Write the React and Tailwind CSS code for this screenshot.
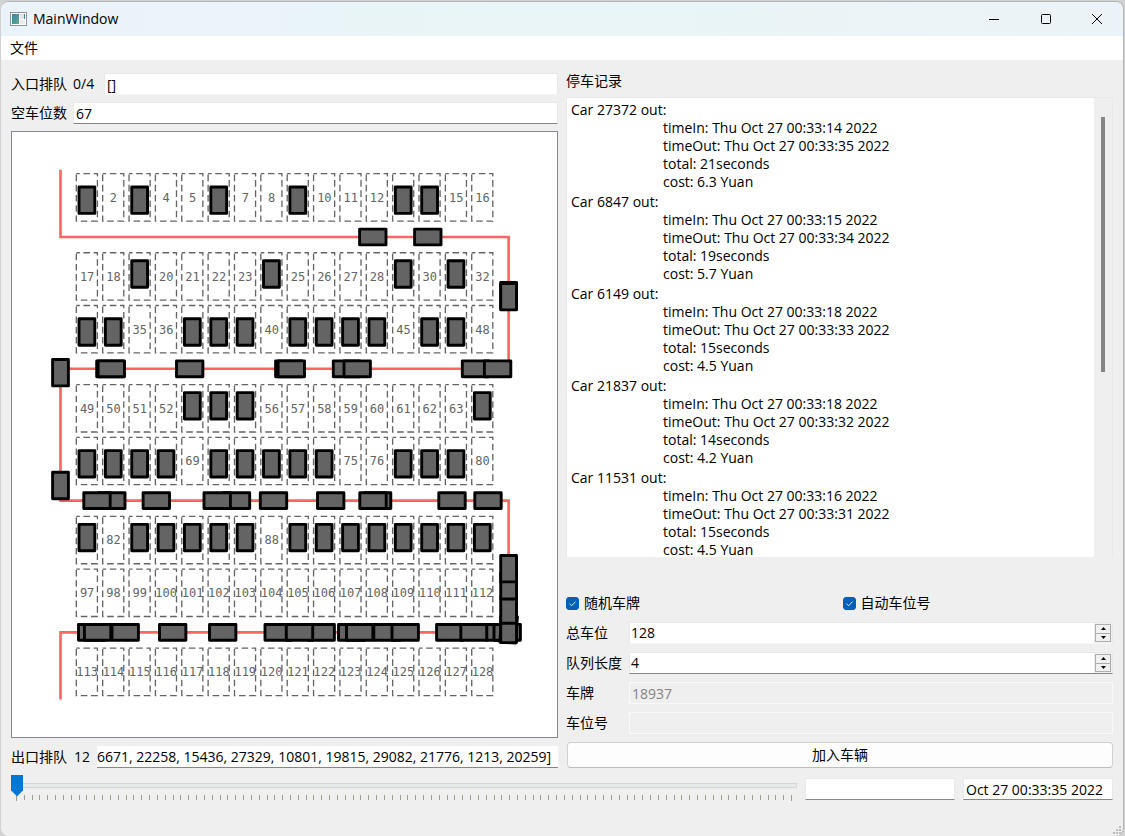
import React from "react";

const U = 26.36;
const X0 = 60.5;
const Y0 = 237;
const ROW_TOPS = [0, 3, 5, 8, 10, 13, 15, 18].map((n) => 173.7 + n * U);
const OCCUPIED = new Set([
  1, 3, 6, 9, 13, 14, 19, 24, 29, 31, 33, 34, 37, 38, 39, 41, 42, 43, 44, 46, 47,
  53, 54, 55, 64, 65, 66, 67, 68, 70, 71, 72, 73, 74, 77, 78, 79,
  81, 83, 84, 85, 86, 87, 89, 90, 91, 92, 93, 94, 95, 96,
]);

// Cars on each road, drawn in order: [x, y, heading in degrees]
const LANES = [Y0, Y0 + 5 * U, Y0 + 10 * U, Y0 + 15 * U];
const RIGHT = X0 + 17 * U;
const CARS = [
  ...[372.8, 427.8].map((x) => [x, LANES[0], 0]),
  [RIGHT, 295.6, 90],
  [RIGHT, 296.7, 90],
  ...[109.9, 111.3, 189.7, 288.8, 291.3, 346.5, 357.2, 475.5, 497.6].map((x) => [x, LANES[1], 0]),
  [X0, 372.7, 90],
  [X0, 485.5, 90],
  ...[488, 452, 377.6, 373, 330.7, 273.5, 236.5, 217.2, 156.3, 111.8, 97].map((x) => [x, LANES[2], 0]),
  ...[91.7, 125.2, 97.6, 172.7, 222.7, 278.2, 321.2, 299.5, 351.7, 387, 359.7, 405.2, 449.8, 474, 500, 507.2].map((x) => [x, LANES[3], 0]),
  [RIGHT, 629.4, 94],
  [RIGHT, 629.4, 90],
  [RIGHT, 610, 90],
  [RIGHT, 585.8, 90],
  [RIGHT, 568.7, 90],
];

function Car({ x, y, angle }) {
  return (
    <rect
      x={-13.2}
      y={-7.9}
      width={26.4}
      height={15.8}
      fill="#646464"
      stroke="#000"
      strokeWidth={2.9}
      strokeLinejoin="round"
      transform={`translate(${x} ${y}) rotate(${angle})`}
    />
  );
}

function ParkingMap() {
  const spots = Array.from({ length: 128 }, (_, i) => {
    const row = Math.floor(i / 16);
    return { n: i + 1, x: X0 + (0.6 + (i % 16)) * U, y: ROW_TOPS[row], row };
  });
  return (
    <svg viewBox="12 132 545 605" className="block w-full h-auto" role="img" aria-label="停车场">
      <path
        d={`M${X0} ${Y0 - 2.5 * U}V${LANES[0]}H${RIGHT}V${LANES[1]}H${X0}V${LANES[2]}H${RIGHT}V${LANES[3]}H${X0}V${LANES[3] + 2.5 * U}`}
        fill="none"
        stroke="#ff6464"
        strokeWidth={2.64}
        strokeLinecap="square"
      />
      {spots.map((s) => (
        <g key={s.n}>
          <rect
            x={s.x}
            y={s.y}
            width={21.1}
            height={47.4}
            fill="none"
            stroke="#646464"
            strokeWidth={1.32}
            strokeDasharray="6.6 3.6"
            strokeDashoffset={3.1}
          />
          {OCCUPIED.has(s.n) ? (
            <Car x={s.x + 10.6} y={s.y + (s.row % 2 === 0 ? 26.5 : 21.2)} angle={90} />
          ) : (
            <text
              x={s.x + 10.8}
              y={s.y + 28}
              textAnchor="middle"
              fill="#646464"
              className="font-['DejaVu_Sans_Mono',monospace] text-[12px]"
            >
              {s.n}
            </text>
          )}
        </g>
      ))}
      {CARS.map(([x, y, angle], i) => (
        <Car key={i} x={x} y={y} angle={angle} />
      ))}
    </svg>
  );
}

const LOG = [
  ["27372", "00:33:14", "00:33:35", "21", "6.3"],
  ["6847", "00:33:15", "00:33:34", "19", "5.7"],
  ["6149", "00:33:18", "00:33:33", "15", "4.5"],
  ["21837", "00:33:18", "00:33:32", "14", "4.2"],
  ["11531", "00:33:16", "00:33:31", "15", "4.5"],
];

const FIELD = "block h-[22px] w-full min-w-0 rounded-none border border-[#e9e9e9] px-[2px] outline-none";
const DARK = "border-b-[#868686] bg-white";
const LIGHT = "border-b-[#f4f4f4] bg-white";
const OFF = "border-[#f9f9f9] bg-[#efefef] text-[#838383]";

function Spin({ id, value, dark }) {
  const btn = "flex flex-1 items-center justify-center border border-[#adadad] bg-[#f0f0f0]";
  return (
    <div className={`flex h-[22px] flex-1 border border-[#e9e9e9] ${dark ? DARK : LIGHT}`}>
      <input id={id} defaultValue={value} inputMode="numeric" className="min-w-0 flex-1 px-px outline-none" />
      <div className="flex w-[18px] flex-col bg-[#f0f0f0] p-px">
        <button type="button" aria-label="增加" className={btn}>
          <svg viewBox="0 0 5 3" className="h-[3px] w-[5px]"><path d="M0 3L2.5 0L5 3Z" /></svg>
        </button>
        <button type="button" aria-label="减少" className={btn + " border-t-0"}>
          <svg viewBox="0 0 5 3" className="h-[3px] w-[5px]"><path d="M0 0L2.5 3L5 0Z" /></svg>
        </button>
      </div>
    </div>
  );
}

function Check({ label }) {
  return (
    <label className="flex flex-1 items-center gap-[5px]">
      <span className="grid">
        <input
          type="checkbox"
          defaultChecked
          className="peer col-start-1 row-start-1 size-[13px] appearance-none rounded-[3px] border border-[#005fb8] checked:bg-[#005fb8]"
        />
        <svg viewBox="0 0 13 13" className="pointer-events-none invisible col-start-1 row-start-1 size-[13px] peer-checked:visible">
          <path d="M3.5 6.7L5.6 8.8L9.6 4.6" fill="none" stroke="#dcebf8" strokeWidth="1" />
        </svg>
      </span>
      {label}
    </label>
  );
}

export default function App() {
  return (
    <div className="flex min-h-screen flex-col bg-[#d2d2d2] px-px pt-px font-['Open_Sans','Noto_Sans_CJK_SC',sans-serif] text-[14px] leading-[18px] text-black">
      <div className="relative flex flex-1 flex-col overflow-hidden rounded-[8px] border-t border-r border-[#b4b4b4] bg-[#efefef]">
        <header className="flex h-[34px] items-center bg-linear-to-r from-[#ebf3fa] via-[#e9f5f7] to-[#ecf3f8] pl-[9px]">
          <svg viewBox="0 0 17 14" className="h-[14px] w-[17px]">
            <defs>
              <linearGradient id="app" x1="0" y1="0" x2="1" y2="1">
                <stop offset="0" stopColor="#3f7fae" />
                <stop offset="1" stopColor="#5fae86" />
              </linearGradient>
            </defs>
            <rect x="0.5" y="0.5" width="16" height="13" fill="#fff" stroke="#8d959b" />
            <rect x="2" y="2" width="7" height="10" fill="url(#app)" />
            <rect x="10" y="2" width="4" height="5" fill="#e3e3e3" />
            <rect x="10" y="8" width="5" height="4" fill="#e9e9e9" />
            <rect x="14" y="2" width="1" height="5" fill="#3f8f8a" />
          </svg>
          <h1 className="flex-1 pl-[6px]">MainWindow</h1>
          <div className="flex h-full">
            <button type="button" aria-label="Minimize" className="flex w-[52px] items-center justify-center">
              <svg viewBox="0 0 10 10" className="size-[10px]"><path d="M0 5.5H10" stroke="#000" /></svg>
            </button>
            <button type="button" aria-label="Maximize" className="flex w-[51px] items-center justify-center">
              <svg viewBox="0 0 10 10" className="size-[10px]"><rect x="0.5" y="0.5" width="9" height="9" rx="1" fill="none" stroke="#000" /></svg>
            </button>
            <button type="button" aria-label="Close" className="flex w-[52px] items-center justify-center">
              <svg viewBox="0 0 10 10" className="size-[10px]"><path d="M0 0L10 10M10 0L0 10" stroke="#000" /></svg>
            </button>
          </div>
        </header>
        <nav className="flex h-[24px] items-center bg-white pl-[9px]">
          <button type="button">文件</button>
        </nav>

        <main className="flex flex-1 flex-col px-[10px] pt-[13px]">
          <div className="grid grid-cols-2 gap-[8px]">
            <section className="flex min-w-0 flex-col gap-[7px]">
              <div className="flex items-center">
                <label htmlFor="entry" className="shrink-0">入口排队</label>
                <span className="w-[37px] shrink-0 pl-[6px]">0/4</span>
                <input id="entry" readOnly value="[]" className={`${FIELD} ${LIGHT}`} />
              </div>
              <div className="flex items-center gap-[6px]">
                <label htmlFor="free" className="shrink-0">空车位数</label>
                <input id="free" readOnly value="67" className={`${FIELD} ${DARK}`} />
              </div>
              <div className="border border-[#828790] bg-white">
                <ParkingMap />
              </div>
              <div className="flex items-center pt-px">
                <label htmlFor="exit" className="shrink-0">出口排队</label>
                <span className="w-[30px] shrink-0 pl-[7px]">12</span>
                <input
                  id="exit"
                  readOnly
                  value="6671, 22258, 15436, 27329, 10801, 19815, 29082, 21776, 1213, 20259]"
                  className={`block h-[22px] w-full min-w-0 border-b outline-none ${DARK}`}
                />
              </div>
            </section>

            <section className="flex min-w-0 flex-col">
              <h2 className="pb-[8px] leading-[16px]">停车记录</h2>
              <div className="flex min-h-0 flex-1 basis-0 overflow-hidden border border-b-0 border-[#e9e9e9]">
                <div className="flex-1 overflow-hidden bg-white pt-[2px] pl-[4px]">
                  {LOG.map(([car, tin, tout, total, cost]) => (
                    <div key={car} className="pb-px last:pb-0">
                      <p className="leading-[19px]">Car {car} out:</p>
                      <div className="pl-[92px]">
                        <p>timeIn: Thu Oct 27 {tin} 2022</p>
                        <p>timeOut: Thu Oct 27 {tout} 2022</p>
                        <p>total: {total}seconds</p>
                        <p>cost: {cost} Yuan</p>
                      </div>
                    </div>
                  ))}
                </div>
                <div className="flex w-[18px] justify-center pt-[19px]">
                  <div className="h-[255px] w-[4px] bg-[#858585]" />
                </div>
              </div>
              <div className="flex h-[65px] items-end gap-[6px] pt-[36px] pb-[10px]">
                <Check label="随机车牌" />
                <Check label="自动车位号" />
              </div>
              <div className="flex flex-col gap-[8px]">
                <div className="flex items-center">
                  <label htmlFor="total" className="w-[63px]">总车位</label>
                  <Spin id="total" value="128" />
                </div>
                <div className="flex items-center">
                  <label htmlFor="queue" className="w-[63px]">队列长度</label>
                  <Spin id="queue" value="4" dark />
                </div>
                <div className="flex items-center">
                  <label htmlFor="plate" className="w-[63px] shrink-0">车牌</label>
                  <input id="plate" disabled value="18937" className={`${FIELD} ${OFF}`} />
                </div>
                <div className="flex items-center">
                  <label htmlFor="spot" className="w-[63px] shrink-0">车位号</label>
                  <input id="spot" disabled value="" className={`${FIELD} ${OFF}`} />
                </div>
                <button type="button" className="ml-px h-[26px] rounded-[4px] border border-[#d0d0d0] border-b-[#bcbcbc] bg-[#fdfdfd]">
                  加入车辆
                </button>
              </div>
            </section>
          </div>

          <div className="flex items-start gap-[8px] pt-[8px]">
            <div className="flex-1">
              <input
                type="range"
                min="0"
                max="99"
                defaultValue="0"
                aria-label="时间"
                className="block h-[18px] w-full appearance-none bg-transparent [&::-webkit-slider-runnable-track]:h-[5px] [&::-webkit-slider-runnable-track]:border [&::-webkit-slider-runnable-track]:border-[#d6d6d6] [&::-webkit-slider-runnable-track]:bg-[#e7eaea] [&::-webkit-slider-thumb]:-mt-[9px] [&::-webkit-slider-thumb]:-ml-px [&::-webkit-slider-thumb]:h-[22px] [&::-webkit-slider-thumb]:w-[12px] [&::-webkit-slider-thumb]:appearance-none [&::-webkit-slider-thumb]:bg-[#0078d7] [&::-webkit-slider-thumb]:[clip-path:polygon(0_0,100%_0,100%_72%,50%_100%,0_72%)]"
              />
              <div className="flex justify-between px-[5px] pt-px">
                {Array.from({ length: 100 }, (_, i) => (
                  <span key={i} className="h-[5px] w-px bg-[#a09d8f] first:h-[6px] last:h-[6px]" />
                ))}
              </div>
            </div>
            <input aria-label="状态" className={`${FIELD} ${DARK} mt-[2px] max-w-[150px]`} />
            <input aria-label="当前时间" readOnly value="Oct 27 00:33:35 2022" className={`${FIELD} ${DARK} mt-[2px] max-w-[150px]`} />
          </div>
        </main>

        <svg viewBox="0 0 11 11" className="absolute right-0 bottom-0 size-[11px]" aria-hidden="true">
          {[[7, 1], [4, 4], [7, 4], [1, 7], [4, 7], [7, 7]].map(([x, y]) => (
            <rect key={`${x}-${y}`} x={x} y={y} width="2" height="2" fill="#bcbcbc" />
          ))}
        </svg>
      </div>
    </div>
  );
}
